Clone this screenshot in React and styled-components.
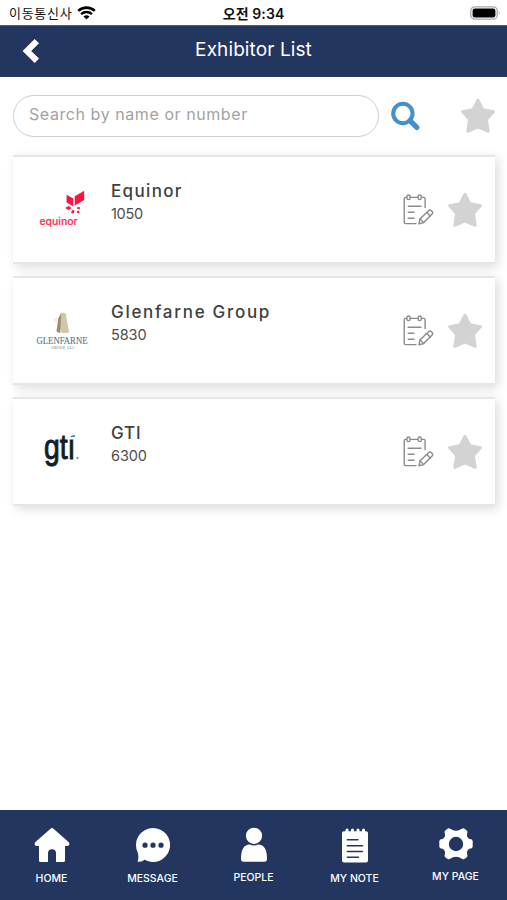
import React, { useState } from 'react';
import styled, { createGlobalStyle } from 'styled-components';

const exhibitors = [
  { name: 'Equinor', booth: '1050', logo: 'equinor', nameSpacing: 1.35, boothSpacing: -0.3 },
  { name: 'Glenfarne Group', booth: '5830', logo: 'glenfarne', nameSpacing: 1.7, boothSpacing: -0.1 },
  { name: 'GTI', booth: '6300', logo: 'gti', nameSpacing: 0.8, boothSpacing: -0.1 },
];

const tabs = [
  { id: 'home', label: 'HOME', gap: 7 },
  { id: 'message', label: 'MESSAGE', gap: 7 },
  { id: 'people', label: 'PEOPLE', gap: 6 },
  { id: 'note', label: 'MY NOTE', gap: 7 },
  { id: 'page', label: 'MY PAGE', gap: 5 },
];

const GlobalStyle = createGlobalStyle`
  * { box-sizing: border-box; }

  body {
    margin: 0;
    background: #fff;
    font-family: Inter, 'Noto Sans CJK KR', sans-serif;
  }

  svg { display: block; flex-shrink: 0; }
`;

const WifiIcon = () => (
  <svg width="19" height="14" viewBox="0 0 19 14" fill="none" stroke="#000">
    <path d="M1.2 4.9C6 .5 13 .5 17.8 4.9" strokeWidth="2.6" />
    <path d="M4.1 8.1C7.2 5.3 11.8 5.3 14.9 8.1" strokeWidth="2.4" />
    <path d="M9.5 13.6 6.5 10.4Q9.5 8.1 12.5 10.4Z" fill="#000" stroke="none" />
  </svg>
);

const BatteryIcon = () => (
  <svg width="31" height="14" viewBox="0 0 31 14">
    <rect x=".8" y=".8" width="26.4" height="12.4" rx="4" fill="#fff" stroke="#a9a9a9" strokeWidth="1.3" />
    <rect x="2.6" y="2.5" width="22.8" height="9" rx="2.2" fill="#000" />
    <path d="M28.8 4.8Q30.5 7 28.8 9.2Z" fill="#999" />
  </svg>
);

const BackIcon = () => (
  <svg width="18" height="26" viewBox="0 0 18 26">
    <path d="M12.7 1 17 5.2 9.2 12.9 17 20.6 12.7 24.9.6 12.9Z" fill="#fff" />
  </svg>
);

const SearchIcon = () => (
  <svg width="30" height="30" viewBox="0 0 30 30" fill="none" stroke="#4490cd">
    <circle cx="11.9" cy="12.5" r="9.7" strokeWidth="4" />
    <path d="m19 19.6 6.8 6.8" strokeWidth="5.2" strokeLinecap="round" />
  </svg>
);

const StarIcon = () => (
  <svg width="36" height="36" viewBox="0 0 36 36">
    <path
      d="M18 2.3 22.9 11.6 33.5 13.6 26.4 21.4 28.2 33.3 18 28.8 7.8 33.3 9.6 21.4 2.5 13.6 13.1 11.6Z"
      fill="#d3d3d3"
      stroke="#d3d3d3"
      strokeWidth="3"
      strokeLinejoin="round"
    />
  </svg>
);

const MemoIcon = () => (
  <svg width="32" height="32" viewBox="0 0 32 32" fill="none" stroke="#8b8b8b" strokeWidth="1.4" strokeLinecap="round" strokeLinejoin="round">
    <path d="M4.5 3.4H3.6Q2.2 3.4 2.2 4.9V28.2Q2.2 29.6 3.7 29.6H14M8.3 3.4H15.6M19.6 3.4H21.7Q23.1 3.4 23.1 4.9V13.5" />
    <rect x="4.9" y="1" width="3.2" height="4.6" rx="1.6" />
    <rect x="16.1" y="1" width="3.2" height="4.6" rx="1.6" />
    <path d="M6.2 12.2H19M6.2 18.2H12M6.2 24.2H12" />
    <path d="m16.9 29.8 1.2-5.1 8.7-8.3q1.2-1 2.4.2l.9.9q1.2 1.2 0 2.4l-8.5 8.7Z" />
    <path d="m24.8 18.4 3.5 3.5M18.1 24.7l3.5 3.9" />
  </svg>
);

const EquinorLogo = () => (
  <svg width="62" height="50" viewBox="0 0 62 50">
    <g fill="#fb1543">
      <path d="M34.6 13.8 41.2 17.4V25.2L34.6 21.6ZM42.8 15.2 52.2 9.7V18.9L42.8 24.6Z" />
      <path d="m33 27 3.6-1.9 3 1.8-3 2.2ZM40.2 29l2.4.6-.8 2.8-2.8-.3ZM44.8 29.8l2.4.3.4 2.3-2.3-.4ZM45.3 26l2.7.3-.3 1.9-2.4-.3Z" />
    </g>
    <text x="7.5" y="44" fontFamily="Inter, sans-serif" fontSize="10.4" fontWeight="500" textLength="38" lengthAdjust="spacingAndGlyphs" fill="#fb3157" stroke="#fb3157" strokeWidth=".2">equinor</text>
  </svg>
);

const GlenfarneLogo = () => (
  <svg width="62" height="50" viewBox="0 0 62 50">
    <path d="M29.4 10.6 33.6 11.3 37.2 30.6 30 31.3 28.2 27Z" fill="#d0c6aa" />
    <path d="M29.4 10.6 26.2 16.7 24.5 29.5 28.2 31.3Z" fill="#9b8b68" />
    <path d="M20.5 17.5 26 15.5 24.5 21Z" fill="#f0eee9" />
    <g fontFamily="'Liberation Serif', serif" fill="#607987">
      <text x="4.5" y="42.4" fontSize="9.8" textLength="51" lengthAdjust="spacingAndGlyphs" stroke="#607987" strokeWidth=".15">GLENFARNE</text>
      <text x="19" y="47.2" fontSize="4" textLength="24">GROUP, LLC</text>
    </g>
  </svg>
);

const GtiLogo = () => (
  <svg width="62" height="50" viewBox="0 0 62 50">
    <text x="12" y="36.2" fontFamily="'Liberation Sans', sans-serif" fontSize="35" textLength="31.5" lengthAdjust="spacingAndGlyphs" fill="#101d2b" stroke="#101d2b" strokeWidth="1">gtı</text>
    <path d="M38.9 13 42.8 12V13.9H38.9Z" fill="#2874b5" />
    <circle cx="45.5" cy="35" r="1.3" fill="#9aa2a9" />
  </svg>
);

const logos = {
  equinor: EquinorLogo,
  glenfarne: GlenfarneLogo,
  gti: GtiLogo,
};

const TabIcon = ({ id }) => (
  <svg width="38" height="38" viewBox="0 0 38 38" fill="#fff">
    {id === 'home' && (
      <path d="M17.5 2.8Q19 1.3 20.5 2.8L35.8 16.2Q37 17.3 36 19.3 35.2 20.3 33.8 20H32V34.5Q32 36 30.5 36H23V27Q23 23.2 19 23.2T15 27V36H7.5Q6 36 6 34.5V20H4.2Q2.8 20.3 2 19.3 1 17.3 2.2 16.2Z" />
    )}
    {id === 'message' && (
      <>
        <path d="M19 2A17 17 0 1 1 10.7 33.8Q7 36.5 3.5 35.5 5.2 32 3.8 26.7A17 17 0 0 1 19 2Z" />
        <g fill="#22365f">
          <circle cx="11" cy="19.2" r="2.6" />
          <circle cx="19" cy="19.2" r="2.6" />
          <circle cx="27" cy="19.2" r="2.6" />
        </g>
      </>
    )}
    {id === 'people' && (
      <>
        <circle cx="19" cy="9.8" r="8.1" />
        <path d="M6 33Q6 18.5 14.8 18.5 19 20.4 23.2 18.5 32 18.5 32 33 32 35.7 29.4 35.7H8.6Q6 35.7 6 33Z" />
      </>
    )}
    {id === 'note' && (
      <>
        <path d="M6 7Q6 5.2 8 5.2H9.5V4Q9.5 2.4 11 2.4T12.5 4V5.2H15V4Q15 2.4 16.5 2.4T18 4V5.2H20.5V4Q20.5 2.4 22 2.4T23.5 4V5.2H26V4Q26 2.4 27.5 2.4T29 4V5.2H30Q32 5.2 32 7V34.5Q32 36.5 30 36.5H8Q6 36.5 6 34.5Z" />
        <path d="M11.3 13.7H22M11.3 19.7H26.5M11.3 25.5H26.5M11.3 31.2H22.5" stroke="#22365f" strokeWidth="1.5" strokeLinecap="round" />
      </>
    )}
    {id === 'page' && (
      <path
        fillRule="evenodd"
        d="M10.2 3.1Q11.2 2 12.7 2.5L14.6 3.5Q19 6 23.4 3.5L25.3 2.5Q26.8 2 27.8 3.1L30 4.8Q30.8 5.6 30.3 7 29 10.5 32.2 13L34.2 13.3Q35.5 13.7 35.7 15.2V20.5Q35.5 22 34.2 22.4L32.2 22.8Q29 25.3 30.3 29 30.8 30.4 29.8 31.2L27.3 32.9Q26 33.6 25 32.7 19 29 13 32.7 12 33.6 10.7 32.9L8.2 31.2Q7.2 30.4 7.7 29 9 25.3 5.8 22.8L3.8 22.4Q2.5 22 2.3 20.5V15.2Q2.5 13.7 3.8 13.3L5.8 13Q9 10.5 7.7 7 7.2 5.6 8 4.8ZM19 10.8A7.2 7.2 0 1 0 19 25.2 7.2 7.2 0 0 0 19 10.8Z"
      />
    )}
  </svg>
);

const App = () => {
  const [query, setQuery] = useState('');

  return (
    <Screen>
      <GlobalStyle />
      <StatusBar>
        <Carrier>
          <span>이동통신사</span>
          <WifiIcon />
        </Carrier>
        <Clock>오전 9:34</Clock>
        <BatteryIcon />
      </StatusBar>

      <Header>
        <BackButton aria-label="Back">
          <BackIcon />
        </BackButton>
        <Title>Exhibitor List</Title>
      </Header>

      <SearchRow>
        <SearchInput
          value={query}
          onChange={(e) => setQuery(e.target.value)}
          placeholder="Search by name or number"
        />
        <IconButton aria-label="Search" $left={12} $top={6}>
          <SearchIcon />
        </IconButton>
        <IconButton aria-label="Favorites" $left={39} $top={3}>
          <StarIcon />
        </IconButton>
      </SearchRow>

      <List>
        {exhibitors.map((item) => {
          const Logo = logos[item.logo];
          return (
            <Card key={item.name}>
              <LogoBox>
                <Logo />
              </LogoBox>
              <Info>
                <Name $spacing={item.nameSpacing}>{item.name}</Name>
                <Booth $spacing={item.boothSpacing}>{item.booth}</Booth>
              </Info>
              <Actions>
                <MemoIcon />
                <StarIcon />
              </Actions>
            </Card>
          );
        })}
      </List>

      <TabBar>
        {tabs.map((tab) => (
          <Tab key={tab.id}>
            <TabIcon id={tab.id} />
            <TabLabel $gap={tab.gap}>{tab.label}</TabLabel>
          </Tab>
        ))}
      </TabBar>
    </Screen>
  );
};

const Screen = styled.div`
  display: flex;
  flex-direction: column;
  width: 507px;
  height: 900px;
  overflow: hidden;
  background: #fff;
`;

const StatusBar = styled.div`
  display: grid;
  grid-template-columns: 1fr auto 1fr;
  align-items: center;
  height: 25px;
  padding: 1px 6px 0 9px;
  color: #111;

  & > svg { justify-self: end; }
`;

const Carrier = styled.div`
  display: flex;
  align-items: center;
  gap: 5px;
  font-size: 13px;
  letter-spacing: 0.7px;
  line-height: 20px;
  white-space: nowrap;

  & > svg { margin-top: -1px; }
`;

const Clock = styled.div`
  margin-right: 3px;
  font-size: 14px;
  font-weight: 600;
  letter-spacing: 0.1px;
`;

const Header = styled.header`
  display: grid;
  grid-template-columns: 60px 1fr 60px;
  height: 52px;
  background: #22365f;
  border-top: 1px solid #4c5c7e;
`;

const BackButton = styled.button`
  display: flex;
  padding: 12px 0 0 22px;
  border: 0;
  background: none;
`;

const Title = styled.h1`
  margin: 0;
  color: #fff;
  font-size: 19px;
  font-weight: 400;
  line-height: 47px;
  letter-spacing: 0.1px;
  text-align: center;
`;

const SearchRow = styled.div`
  display: flex;
  align-items: flex-start;
  height: 78px;
  padding: 18px 11px 0 13px;
`;

const SearchInput = styled.input`
  width: 366px;
  height: 42px;
  padding: 0 15px 4px;
  border: 1px solid #cfcfcf;
  border-radius: 21px;
  outline: 0;
  color: #444;
  font-family: inherit;
  font-size: 16px;
  letter-spacing: 0.57px;

  &::placeholder { color: #a2a2a2; }
`;

const IconButton = styled.button`
  margin: ${(p) => p.$top}px 0 0 ${(p) => p.$left}px;
  padding: 0;
  border: 0;
  background: none;
`;

const List = styled.div`
  display: flex;
  flex: 1;
  flex-direction: column;
  gap: 12px;
  padding: 0 12px 0 13px;
`;

const Card = styled.div`
  display: flex;
  height: 109px;
  background: #fff;
  border-top: 2px solid #e6e6e6;
  border-bottom: 2px solid #e6e6e6;
  box-shadow: 3px 3px 10px rgba(0, 0, 0, 0.14);
`;

const LogoBox = styled.div`
  width: 98px;
  padding: 24px 0 0 19px;
`;

const Info = styled.div`
  flex: 1;
  padding-top: 23px;
`;

const Name = styled.div`
  color: #404040;
  font-size: 17px;
  font-weight: 450;
  line-height: 22px;
  letter-spacing: ${(p) => p.$spacing}px;
  white-space: nowrap;
`;

const Booth = styled.div`
  margin-top: 1px;
  color: #4d4d4d;
  font-size: 14.5px;
  line-height: 22px;
  letter-spacing: ${(p) => p.$spacing}px;
`;

const Actions = styled.div`
  display: flex;
  align-items: flex-start;
  gap: 13px;
  padding: 35px 12px 0 0;

  & > :first-child { margin-top: 2px; }
`;

const TabBar = styled.nav`
  display: grid;
  grid-template-columns: repeat(5, 101px);
  height: 90px;
  padding-left: 1px;
  background: #22365f;
`;

const Tab = styled.div`
  display: flex;
  flex-direction: column;
  align-items: center;
  padding-top: 16px;
`;

const TabLabel = styled.span`
  margin-top: ${(p) => p.$gap}px;
  color: #fff;
  font-size: 10.5px;
  font-weight: 500;
  line-height: 16px;
`;

export default App;
